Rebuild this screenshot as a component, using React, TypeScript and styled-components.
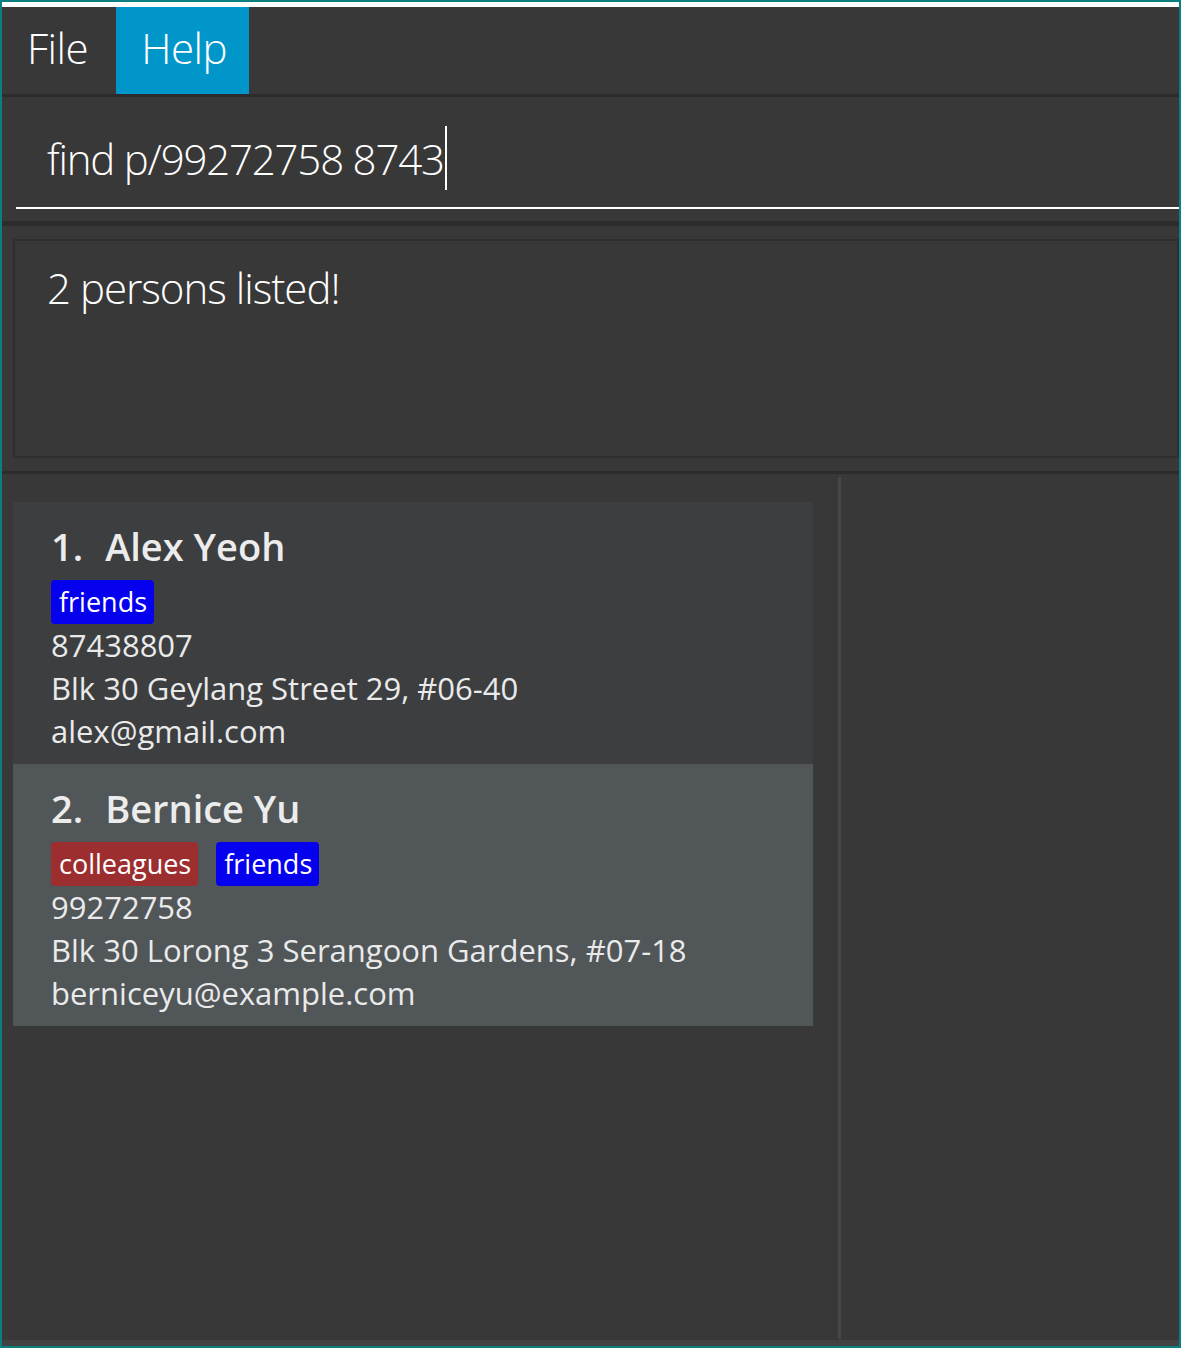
import React from "react";
import styled, { createGlobalStyle } from "styled-components";

const Global = createGlobalStyle`
  html, body { margin: 0; padding: 0; background: #383838; }
  body { font-family: "Open Sans", "Noto Sans", sans-serif; }
  * { box-sizing: border-box; }
`;

const Window = styled.div`
  width: 1181px;
  height: 1348px;
  border: 2px solid #0b7f7d;
  background: #383838;
  display: flex;
  flex-direction: column;
  overflow: hidden;
`;

const TopStrip = styled.div`
  height: 5px;
  background: #ffffff;
  flex: none;
`;

const MenuBar = styled.div`
  height: 90px;
  flex: none;
  display: flex;
  background: #383838;
  border-bottom: 3px solid #2c2c2c;
`;

const MenuItem = styled.div<{ $active?: boolean }>`
  display: flex;
  align-items: center;
  padding: 0 22px 6px 25px;
  height: 87px;
  font-family: "Open Sans", sans-serif;
  font-weight: 300;
  font-size: 42px;
  letter-spacing: -0.5px;
  color: #ffffff;
  background: ${(p) => (p.$active ? "#0096c9" : "transparent")};
  &:first-child {
    padding-right: 28px;
  }
`;

const CommandArea = styled.div`
  height: 124px;
  flex: none;
  padding: 0 0 12px 14px;
  display: flex;
  flex-direction: column;
  justify-content: flex-end;
`;

const CommandInput = styled.div`
  height: 100px;
  border-bottom: 2px solid #ffffff;
  display: flex;
  align-items: center;
  padding-left: 31px;
  font-weight: 300;
  font-size: 42px;
  letter-spacing: -1.2px;
  color: #ffffff;
  white-space: pre;
`;

const Caret = styled.span`
  display: inline-block;
  width: 2px;
  height: 64px;
  background: #ffffff;
  margin-left: 1px;
`;

const Separator = styled.div<{ $h: number }>`
  height: ${(p) => p.$h}px;
  flex: none;
  background: #2c2c2c;
`;

const ResultArea = styled.div`
  height: 245px;
  flex: none;
  padding: 13px 0 13px 11px;
`;

const ResultBox = styled.div`
  height: 100%;
  border: 2px solid #2e2e2e;
  padding: 18px 0 0 32px;
  font-weight: 300;
  font-size: 42px;
  letter-spacing: -1px;
  color: #ffffff;
`;

const Lower = styled.div`
  flex: 1;
  display: flex;
  min-height: 0;
  border-bottom: 6px solid #424242;
`;

const ListPanel = styled.div`
  width: 836px;
  flex: none;
  padding: 28px 25px 0 11px;
  display: flex;
  flex-direction: column;
`;

const Splitter = styled.div`
  width: 3px;
  flex: none;
  margin: 3px 0 1px 0;
  background: #474747;
`;

const Card = styled.div<{ $odd?: boolean }>`
  height: 262px;
  background: ${(p) => (p.$odd ? "#515658" : "#3c3e40")};
  padding: 20px 0 0 38px;
  display: flex;
  flex-direction: column;
  color: #ececec;
`;

const Name = styled.div`
  font-weight: 600;
  font-size: 38px;
  line-height: 48px;
  display: flex;
  gap: 22px;
`;

const Tags = styled.div`
  display: flex;
  gap: 18px;
  margin-top: 10px;
`;

const Tag = styled.span<{ $color: string }>`
  background: ${(p) => p.$color};
  color: #ffffff;
  font-size: 27px;
  line-height: 44px;
  height: 44px;
  padding: 0 7px 0 8px;
  border-radius: 4px;
`;

const Detail = styled.div`
  font-size: 31px;
  line-height: 43px;
  color: #eaeaea;
`;

const RightPanel = styled.div`
  flex: 1;
`;

type Person = {
  name: string;
  tags: { label: string; color: string }[];
  phone: string;
  address: string;
  email: string;
};

const people: Person[] = [
  {
    name: "Alex Yeoh",
    tags: [{ label: "friends", color: "#0500ee" }],
    phone: "87438807",
    address: "Blk 30 Geylang Street 29, #06-40",
    email: "alex@gmail.com",
  },
  {
    name: "Bernice Yu",
    tags: [
      { label: "colleagues", color: "#9c2e30" },
      { label: "friends", color: "#0500ee" },
    ],
    phone: "99272758",
    address: "Blk 30 Lorong 3 Serangoon Gardens, #07-18",
    email: "berniceyu@example.com",
  },
];

export default function App() {
  return (
    <>
      <Global />
      <Window>
        <TopStrip />
        <MenuBar>
          <MenuItem>File</MenuItem>
          <MenuItem $active>Help</MenuItem>
        </MenuBar>
        <CommandArea>
          <CommandInput>
            find p/99272758 8743
            <Caret />
          </CommandInput>
        </CommandArea>
        <Separator $h={5} />
        <ResultArea>
          <ResultBox>2 persons listed!</ResultBox>
        </ResultArea>
        <Separator $h={3} />
        <Lower>
          <ListPanel>
            {people.map((p, i) => (
              <Card key={p.name} $odd={i % 2 === 1}>
                <Name>
                  <span>{i + 1}.</span>
                  <span>{p.name}</span>
                </Name>
                <Tags>
                  {p.tags.map((t) => (
                    <Tag key={t.label} $color={t.color}>
                      {t.label}
                    </Tag>
                  ))}
                </Tags>
                <Detail>{p.phone}</Detail>
                <Detail>{p.address}</Detail>
                <Detail>{p.email}</Detail>
              </Card>
            ))}
          </ListPanel>
          <Splitter />
          <RightPanel />
        </Lower>
      </Window>
    </>
  );
}
